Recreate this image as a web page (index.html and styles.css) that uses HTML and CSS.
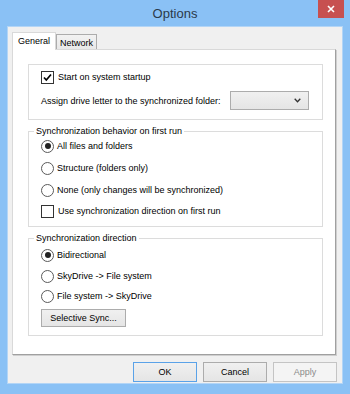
FILE: index.html
```html
<!DOCTYPE html>
<html>
<head>
<meta charset="utf-8">
<link rel="stylesheet" href="styles.css">
</head>
<body>
<div class="window">
  <div class="titlebar">
    <span class="title">Options</span>
    <div class="close"><svg width="8" height="8" viewBox="0 0 8 8"><path d="M1 1L7 7M7 1L1 7" stroke="#fff" stroke-width="1.6" fill="none"/></svg></div>
  </div>
  <div class="client">
    <div class="tabs">
      <div class="tab active">General</div>
      <div class="tab">Network</div>
    </div>
    <div class="panel">
      <div class="group plain">
        <div class="row r1"><span class="check"><svg width="11" height="11" viewBox="0 0 11 11"><path d="M2 5.5L4.3 8L9 2.5" stroke="#000" stroke-width="1.7" fill="none"/></svg></span><span class="lbl">Start on system startup</span></div>
        <div class="row drive"><span class="lbl0">Assign drive letter to the synchronized folder:</span><div class="select"><svg width="7" height="5" viewBox="0 0 7 5"><path d="M0.7 0.8L3.5 3.8L6.3 0.8" stroke="#333" stroke-width="1.3" fill="none"/></svg></div></div>
      </div>
      <fieldset class="group g2">
        <legend>Synchronization behavior on first run</legend>
        <div class="row"><span class="radio on"></span><span class="rlbl">All files and folders</span></div>
        <div class="row m4"><span class="radio"></span><span class="rlbl">Structure (folders only)</span></div>
        <div class="row m4"><span class="radio"></span><span class="rlbl">None (only changes will be synchronized)</span></div>
        <div class="row m3"><span class="check"></span><span class="lbl">Use synchronization direction on first run</span></div>
      </fieldset>
      <fieldset class="group g3">
        <legend>Synchronization direction</legend>
        <div class="row m2"><span class="radio on"></span><span class="rlbl">Bidirectional</span></div>
        <div class="row m3"><span class="radio"></span><span class="rlbl">SkyDrive -&gt; File system</span></div>
        <div class="row m2"><span class="radio"></span><span class="rlbl">File system -&gt; SkyDrive</span></div>
        <button class="btn sync">Selective Sync...</button>
      </fieldset>
    </div>
    <div class="buttons">
      <button class="btn default">OK</button>
      <button class="btn">Cancel</button>
      <button class="btn disabled">Apply</button>
    </div>
  </div>
</div>
</body>
</html>
```

FILE: styles.css
```css
* { box-sizing: border-box; }
body {
  margin: 0;
  font-family: "Liberation Sans", Arial, sans-serif;
  font-size: 9px;
  color: #000;
}
.window {
  width: 350px;
  height: 394px;
  background: #8ac1f5;
  display: flex;
  flex-direction: column;
}
.titlebar {
  height: 26px;
  position: relative;
  text-align: center;
  font-size: 13px;
  line-height: 27px;
  color: #2a3a4a;
}
.close {
  position: absolute;
  top: 0;
  right: 6px;
  width: 26px;
  height: 18px;
  background: #c75050;
  display: flex;
  align-items: center;
  justify-content: center;
}
.close svg { display: block; }
.client {
  margin: 0 7px;
  height: 358px;
  border: 1px solid #b3d5f6;
  background: #f0f0f0;
  padding: 5px 5px 0 4px;
}
.tabs {
  display: flex;
  align-items: flex-end;
  height: 17px;
  position: relative;
  z-index: 1;
}
.tab {
  height: 15px;
  width: 41px;
  border: 1px solid #acacac;
  border-bottom: none;
  background: linear-gradient(#f2f2f2, #e8e8e8);
  display: flex;
  align-items: center;
  justify-content: center;
  padding-top: 1px;
}
.tab.active {
  width: 44px;
  height: 18px;
  background: #fff;
  border-color: #d9d9d9;
  margin-bottom: -1px;
  padding-top: 0;
  padding-bottom: 1px;
}
.panel {
  height: 306px;
  margin-right: 1px;
  background: #fff;
  border: 1px solid #d9d9d9;
  border-right-color: #a0a0a0;
  border-bottom-color: #a0a0a0;
  box-shadow: 1px 1px 0 #cfcfcf;
  padding: 14px 12px 0 15px;
}
.group {
  width: 295px;
  border: 1px solid #dcdcdc;
  margin: 0;
  min-inline-size: 0;
}
.plain {
  height: 56px;
  padding: 3px 12px 0;
}
fieldset.group {
  margin-top: 5px;
  padding: 0 12px;
}
fieldset.g2 { padding-bottom: 6px; }
fieldset.g3 { padding-bottom: 8px; }
legend {
  padding: 0 2px;
  margin-left: -7px;
  line-height: 12px;
  height: 12px;
}
.row {
  display: flex;
  align-items: center;
  height: 18px;
}
.m2 { margin-top: 2px; }
.m3 { margin-top: 3px; }
.m4 { margin-top: 4px; }
.drive {
  height: 19px;
  margin-top: 5px;
  justify-content: space-between;
  padding-right: 1px;
}
.check {
  width: 13px;
  height: 13px;
  border: 1px solid #333;
  background: #fff;
  display: flex;
  align-items: center;
  justify-content: center;
  flex: none;
}
.check svg { display: block; }
.lbl { margin-left: 4px; }
.radio {
  width: 13px;
  height: 13px;
  border: 1px solid #5a5a5a;
  border-radius: 50%;
  background: #fff;
  flex: none;
  display: flex;
  align-items: center;
  justify-content: center;
}
.radio.on::after {
  content: "";
  width: 6px;
  height: 6px;
  border-radius: 50%;
  background: #222;
}
.rlbl { margin-left: 3px; }
.select {
  width: 79px;
  height: 19px;
  border: 1px solid #acacac;
  background: linear-gradient(#f0f0f0, #e5e5e5);
  display: flex;
  align-items: center;
  justify-content: flex-end;
  padding-right: 7px;
}
.select svg { display: block; }
.btn {
  font-family: "Liberation Sans", Arial, sans-serif;
  font-size: 9px;
  color: #000;
  border: 1px solid #acacac;
  background: linear-gradient(#f0f0f0, #e5e5e5);
  padding: 0;
  margin: 0;
  width: 64px;
  height: 20px;
}
.sync {
  display: block;
  width: 85px;
  height: 18px;
  margin-top: 4px;
}
.buttons {
  display: flex;
  justify-content: flex-end;
  gap: 6px;
  margin-top: 7px;
}
.default { border-color: #5aa2e8; }
.disabled {
  color: #8a8a8a;
  border-color: #c4c4c4;
  background: #f4f4f4;
}
```
